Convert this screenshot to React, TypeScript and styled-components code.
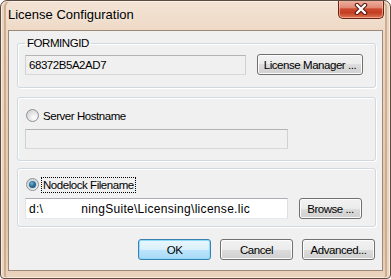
import styled, { createGlobalStyle } from "styled-components"

const GlobalStyle = createGlobalStyle`
  html, body {
    margin: 0;
    padding: 0;
    background: #ffffff;
  }
  body {
    font-family: "Liberation Sans", Arial, sans-serif;
    font-size: 11.5px;
    color: #000;
  }
  * {
    box-sizing: border-box;
  }
`

const Window = styled.div`
  width: 391px;
  height: 279px;
  display: flex;
  flex-direction: column;
  padding: 0 7px 7px 7px;
  border: 1px solid #5f4b3d;
  border-radius: 7px 7px 4px 4px;
  background: linear-gradient(
    180deg,
    #f3e3d4 0%,
    #edd8c4 12%,
    #e6ceb6 45%,
    #e0c4a9 80%,
    #ead3bd 100%
  );
  box-shadow: inset 0 0 0 1px rgba(255, 255, 255, 0.55), inset 3px 0 0 #e9d5c1,
    inset 5px 0 0 #cfae8f, inset -3px 0 0 #e9d5c1, inset -5px 0 0 #cfae8f;
  overflow: hidden;
`

const TitleBar = styled.div`
  height: 29px;
  flex: none;
  display: flex;
  align-items: flex-start;
  justify-content: space-between;
`

const Title = styled.div`
  margin-top: 6px;
  font-family: "Liberation Sans", Arial, sans-serif;
  font-size: 13px;
  line-height: 15px;
  color: #000;
  text-shadow: 0 0 8px rgba(255, 255, 255, 0.9);
`

const CloseButton = styled.div`
  width: 46px;
  height: 19px;
  margin-top: -1px;
  margin-right: -1px;
  display: flex;
  align-items: center;
  justify-content: center;
  border: 1px solid #6b2214;
  border-top: none;
  border-radius: 0 0 5px 5px;
  background: linear-gradient(
    180deg,
    #eeb4a4 0%,
    #e08a74 42%,
    #cc4a2e 50%,
    #c33d21 70%,
    #dc7552 100%
  );
  box-shadow: inset 0 0 0 1px rgba(255, 210, 190, 0.55);
`

const Client = styled.div`
  flex: 1;
  display: flex;
  flex-direction: column;
  padding: 5px 6px 0 8px;
  background: #f0f0f0;
  border: 1px solid #9c8878;
`

const GroupBase = `
  margin: 0;
  border: 1px solid #cfd9df;
  border-radius: 3px;
  box-shadow: inset 1px 1px 0 #ffffff, 1px 1px 0 #ffffff;
  min-width: 0;
`

const LegendGroup = styled.fieldset`
  ${GroupBase}
  padding: 4px 12px 12px 7px;
`

const Legend = styled.legend`
  padding: 0 2px;
  font-size: 11.5px;
  line-height: 14px;
  letter-spacing: -0.45px;
`

const RadioGroup = styled.div<{ $top: number; $pt: number; $pb: number }>`
  ${GroupBase}
  margin-top: ${(p) => p.$top}px;
  padding: ${(p) => p.$pt}px 12px ${(p) => p.$pb}px 7px;
  display: flex;
  flex-direction: column;
  gap: 6px;
`

const Row = styled.div`
  display: flex;
  align-items: center;
  gap: 11px;
`

const TextField = styled.div<{ $width: number; $height: number; $white?: boolean }>`
  width: ${(p) => p.$width}px;
  height: ${(p) => p.$height}px;
  display: flex;
  align-items: center;
  padding: 0 3px;
  background: ${(p) => (p.$white ? "#ffffff" : "#f0f0f0")};
  border: 1px solid;
  border-color: ${(p) =>
    p.$white ? "#abadb3 #dbdfe6 #e3e9ef #e2e3ea" : "#b4b4b4 #d0d0d0 #d8d8d8 #d0d0d0"};
  font-size: 11.5px;
  letter-spacing: -0.45px;
  white-space: nowrap;
  overflow: hidden;
`

const PathText = styled.span`
  font-size: 12px;
  letter-spacing: 0.3px;
`

const Redacted = styled.span`
  display: inline-block;
  width: 38px;
`

const RadioRow = styled.div`
  height: 15px;
  display: flex;
  align-items: center;
  gap: 3px;
  padding-left: 1px;
`

const Radio = styled.span<{ $checked?: boolean }>`
  width: 13px;
  height: 13px;
  flex: none;
  border-radius: 50%;
  border: 1px solid #8e9296;
  display: flex;
  align-items: center;
  justify-content: center;
  background: radial-gradient(circle at 65% 70%, #ffffff 0%, #e6e6e6 45%, #c9c9c9 100%);

  &::after {
    content: "";
    display: ${(p) => (p.$checked ? "block" : "none")};
    width: 7px;
    height: 7px;
    border-radius: 50%;
    background: radial-gradient(circle at 40% 35%, #6fb4d8 0%, #2d6f97 45%, #173f5a 100%);
    box-shadow: 0 0 0 1px #c8d6dd;
  }
`

const RadioLabel = styled.span<{ $focused?: boolean }>`
  padding: 0 1px;
  line-height: 14px;
  font-size: 11.5px;
  letter-spacing: -0.45px;
  outline: ${(p) => (p.$focused ? "1px dotted #000" : "none")};
`

const Button = styled.div<{ $width: number; $default?: boolean }>`
  width: ${(p) => p.$width}px;
  height: 21px;
  flex: none;
  display: flex;
  align-items: center;
  justify-content: center;
  border: 1px solid ${(p) => (p.$default ? "#3c7fb1" : "#707070")};
  border-radius: 3px;
  font-size: 11.5px;
  letter-spacing: -0.45px;
  background: ${(p) =>
    p.$default
      ? "linear-gradient(180deg, #eaf6fd 0%, #d9f0fc 50%, #bee6fd 50%, #a7d9f5 100%)"
      : "linear-gradient(180deg, #f2f2f2 0%, #ebebeb 50%, #dddddd 50%, #cfcfcf 100%)"};
  box-shadow: inset 0 0 0 1px ${(p) => (p.$default ? "#8fdcf8" : "#fcfcfc")};
`

const ButtonRow = styled.div`
  margin-top: 12px;
  padding-right: 1px;
  display: flex;
  justify-content: flex-end;
  gap: 9px;
`

const CloseIcon = () => (
  <svg width="14" height="12" viewBox="0 0 14 12">
    <path d="M3 2 L11 10 M11 2 L3 10" stroke="#5a1a10" strokeWidth="4.5" strokeLinecap="round" />
    <path d="M3 2 L11 10 M11 2 L3 10" stroke="#ffffff" strokeWidth="2.4" strokeLinecap="round" />
  </svg>
)

const App = () => {
  return (
    <>
      <GlobalStyle />
      <Window>
        <TitleBar>
          <Title>License Configuration</Title>
          <CloseButton>
            <CloseIcon />
          </CloseButton>
        </TitleBar>
        <Client>
          <LegendGroup>
            <Legend>FORMINGID</Legend>
            <Row>
              <TextField $width={222} $height={20}>
                68372B5A2AD7
              </TextField>
              <Button $width={106}>License Manager ...</Button>
            </Row>
          </LegendGroup>

          <RadioGroup $top={9} $pt={10} $pb={11}>
            <RadioRow>
              <Radio />
              <RadioLabel>Server Hostname</RadioLabel>
            </RadioRow>
            <Row>
              <TextField $width={263} $height={20} />
            </Row>
          </RadioGroup>

          <RadioGroup $top={7} $pt={8} $pb={7}>
            <RadioRow>
              <Radio $checked />
              <RadioLabel $focused>Nodelock Filename</RadioLabel>
            </RadioRow>
            <Row>
              <TextField $width={263} $height={21} $white>
                <PathText>
                  d:\<Redacted />ningSuite\Licensing\license.lic
                </PathText>
              </TextField>
              <Button $width={63}>Browse ...</Button>
            </Row>
          </RadioGroup>

          <ButtonRow>
            <Button $width={73} $default>
              OK
            </Button>
            <Button $width={73}>Cancel</Button>
            <Button $width={73}>Advanced...</Button>
          </ButtonRow>
        </Client>
      </Window>
    </>
  )
}

export default App
